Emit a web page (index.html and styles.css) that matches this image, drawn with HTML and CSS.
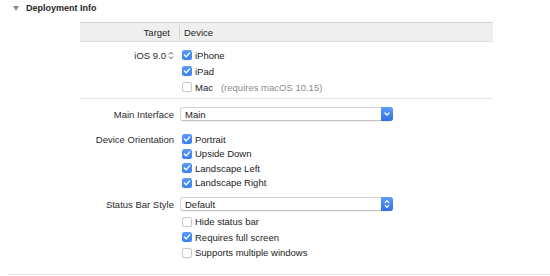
FILE: index.html
```html
<!DOCTYPE html>
<html>
<head>
<meta charset="utf-8">
<link rel="stylesheet" href="styles.css">
</head>
<body>
<div class="section-head">
  <svg class="disclosure" viewBox="0 0 6 5" width="6" height="5"><path d="M0 0 H6 L3 5 Z"/></svg>
  <span>Deployment Info</span>
</div>
<div class="panel">
  <div class="thead">
    <div class="th th-target">Target</div>
    <div class="th th-device">Device</div>
  </div>
  <div class="group group-target">
    <div class="field">
      <div class="label label-row">iOS 9.0<svg class="stepper" viewBox="0 0 6 9" width="6" height="9"><path d="M1 3.5 L3 1.3 L5 3.5 M1 5.5 L3 7.7 L5 5.5"/></svg></div>
      <div class="controls">
        <label class="check row16"><span class="box on"><svg viewBox="0 0 10 10"><path d="M2.4 5.1 L4.2 6.9 L7.6 2.9"/></svg></span>iPhone</label>
        <label class="check row16"><span class="box on"><svg viewBox="0 0 10 10"><path d="M2.4 5.1 L4.2 6.9 L7.6 2.9"/></svg></span>iPad</label>
        <label class="check row16"><span class="box"></span>Mac<span class="note">(requires macOS 10.15)</span></label>
      </div>
    </div>
  </div>
  <div class="group group-settings">
    <div class="field field-main">
      <div class="label label-popup">Main Interface</div>
      <div class="controls">
        <div class="popup"><span class="popup-text">Main</span><span class="popup-btn"><svg viewBox="0 0 12 14" width="12" height="14"><path d="M4 6 L6 8 L8 6"/></svg></span></div>
      </div>
    </div>
    <div class="field field-orient">
      <div class="label label-orient">Device Orientation</div>
      <div class="controls">
        <label class="check row14"><span class="box on"><svg viewBox="0 0 10 10"><path d="M2.4 5.1 L4.2 6.9 L7.6 2.9"/></svg></span>Portrait</label>
        <label class="check row14"><span class="box on"><svg viewBox="0 0 10 10"><path d="M2.4 5.1 L4.2 6.9 L7.6 2.9"/></svg></span>Upside Down</label>
        <label class="check row14"><span class="box on"><svg viewBox="0 0 10 10"><path d="M2.4 5.1 L4.2 6.9 L7.6 2.9"/></svg></span>Landscape Left</label>
        <label class="check row14"><span class="box on"><svg viewBox="0 0 10 10"><path d="M2.4 5.1 L4.2 6.9 L7.6 2.9"/></svg></span>Landscape Right</label>
      </div>
    </div>
    <div class="field field-status">
      <div class="label label-popup">Status Bar Style</div>
      <div class="controls">
        <div class="popup"><span class="popup-text">Default</span><span class="popup-btn"><svg viewBox="0 0 12 14" width="12" height="14"><path d="M4.2 5.6 L6 3.8 L7.8 5.6 M4.2 8.4 L6 10.2 L7.8 8.4"/></svg></span></div>
        <div class="sub-checks">
          <label class="check row15"><span class="box"></span>Hide status bar</label>
          <label class="check row15"><span class="box on"><svg viewBox="0 0 10 10"><path d="M2.4 5.1 L4.2 6.9 L7.6 2.9"/></svg></span>Requires full screen</label>
          <label class="check row15"><span class="box"></span>Supports multiple windows</label>
        </div>
      </div>
    </div>
  </div>
</div>
<div class="bottom-rule"></div>
</body>
</html>
```
FILE: styles.css
```css
html, body {
  margin: 0;
  padding: 0;
}
body {
  width: 550px;
  height: 276px;
  overflow: hidden;
  background: #ffffff;
  font-family: "Liberation Sans", Arial, sans-serif;
  font-size: 9.5px;
  color: #222222;
  display: flex;
  flex-direction: column;
}
.section-head {
  height: 16px;
  display: flex;
  align-items: center;
  padding-left: 13px;
  gap: 7px;
  font-weight: bold;
  font-size: 9px;
  color: #262626;
}
.disclosure {
  fill: #8c8c8c;
}
.panel {
  margin-top: 6px;
  margin-left: 80px;
  width: 413px;
}
.thead {
  display: grid;
  grid-template-columns: 100px 1fr;
  height: 18px;
  background: #efefef;
  border-top: 1px solid #d4d4d4;
  border-bottom: 1px solid #dedede;
}
.th {
  display: flex;
  align-items: center;
  color: #262626;
}
.th-target {
  justify-content: flex-end;
  padding-right: 10px;
  position: relative;
}
.th-target::after {
  content: "";
  position: absolute;
  right: 0;
  top: 2px;
  bottom: 2px;
  width: 1px;
  background: #d2d2d2;
}
.th-device {
  padding-left: 4px;
}
.group-target {
  padding-top: 5px;
  padding-bottom: 3px;
  border-bottom: 1px solid #e4e4e4;
}
.group-settings {
  padding-top: 8px;
}
.field {
  display: grid;
  grid-template-columns: 94px 1fr;
  column-gap: 7px;
}
.label {
  display: flex;
  align-items: center;
  justify-content: flex-end;
  color: #2a2a2a;
  white-space: nowrap;
}
.label-row {
  height: 16px;
  gap: 2px;
}
.stepper {
  fill: none;
  stroke: #555;
  stroke-width: 1;
}
.label-popup {
  height: 14px;
}
.label-orient {
  height: 14.5px;
}
.field-orient {
  margin-top: 11px;
}
.field-status {
  margin-top: 7px;
}
.controls {
  display: flex;
  flex-direction: column;
}
.check {
  display: flex;
  align-items: center;
  gap: 3px;
  white-space: nowrap;
  color: #222222;
}
.row16 { height: 16px; }
.row14 { height: 14.5px; }
.row15 { height: 15.5px; }
.box {
  box-sizing: border-box;
  width: 10px;
  height: 10px;
  margin-left: 1px;
  border-radius: 2.5px;
  background: #ffffff;
  border: 1px solid #c4c4c4;
  box-shadow: 0 0.5px 0.5px rgba(0,0,0,0.06);
  flex: none;
  display: flex;
}
.box.on {
  border: none;
  background: linear-gradient(#5a9af9, #3a7ff3);
}
.box svg {
  width: 10px;
  height: 10px;
  fill: none;
  stroke: #ffffff;
  stroke-width: 1.4;
  stroke-linecap: round;
  stroke-linejoin: round;
}
.note {
  margin-left: 5px;
  color: #8c8c8c;
}
.popup {
  box-sizing: border-box;
  margin-left: -1px;
  width: 213px;
  height: 14px;
  display: flex;
  align-items: stretch;
  background: #ffffff;
  border: 1px solid #d3d3d3;
  border-bottom-color: #c2c2c2;
  border-radius: 3px;
  box-shadow: 0 0.5px 0.5px rgba(0,0,0,0.08);
}
.popup-text {
  flex: 1;
  display: flex;
  align-items: center;
  padding-left: 4px;
  color: #222222;
}
.popup-btn {
  width: 12px;
  margin: -1px -1px -1px 0;
  border-radius: 0 3px 3px 0;
  background: linear-gradient(#5d9cf9, #2f70ea);
  display: flex;
  align-items: center;
  justify-content: center;
}
.popup-btn svg {
  fill: none;
  stroke: #ffffff;
  stroke-width: 1.3;
  stroke-linecap: round;
  stroke-linejoin: round;
}
.sub-checks {
  margin-top: 3px;
  display: flex;
  flex-direction: column;
}
.bottom-rule {
  margin-top: auto;
  margin-bottom: 1px;
  margin-left: 8px;
  height: 1px;
  background: #e4e4e4;
}
```
